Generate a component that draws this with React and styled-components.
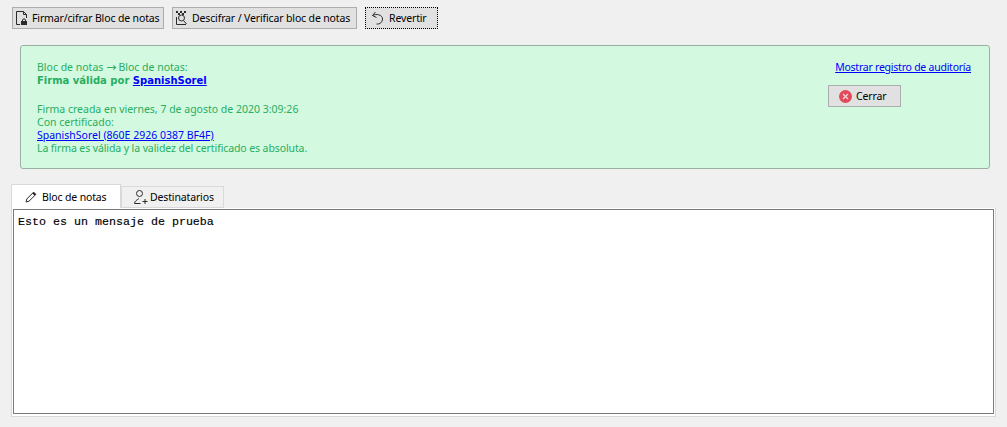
import React from "react";
import styled, { createGlobalStyle } from "styled-components";

const GlobalStyle = createGlobalStyle`
  html, body {
    margin: 0;
    padding: 0;
    background: #f0f0f0;
  }
  * {
    box-sizing: border-box;
  }
`;

const Page = styled.div`
  width: 1007px;
  height: 427px;
  padding: 7px 11px 0;
  overflow: hidden;
  background: #f0f0f0;
  color: #000000;
  font-family: "Noto Sans", "Liberation Sans", sans-serif;
  font-size: 10.5px;
`;

const Toolbar = styled.div`
  display: flex;
  gap: 8px;
  height: 22px;
  margin-left: 1px;
`;

const Button = styled.button`
  display: flex;
  align-items: center;
  gap: ${(p) => p.$gap || 3}px;
  height: 22px;
  width: ${(p) => p.$width}px;
  padding: 0 0 0 ${(p) => p.$pad || 0}px;
  background: #e1e1e1;
  border: 1px ${(p) => (p.$focused ? "dotted #000000" : "solid #adadad")};
  color: #000000;
  font: inherit;
  letter-spacing: -0.14px;
  white-space: nowrap;
`;

const Banner = styled.div`
  display: flex;
  justify-content: space-between;
  width: 970px;
  height: 124px;
  margin: 16px 0 0 9px;
  padding: 15px 18px 0 16px;
  background: #d3f9e0;
  border: 1px solid #9ab0a1;
  border-radius: 3px;
  color: #27ae60;
  line-height: 13px;
`;

const Arrow = styled.span`
  margin: 0 2px 0 3px;
  font-family: "DejaVu Sans", sans-serif;
  font-size: 12px;
`;

const Strong = styled.div`
  margin-bottom: 16px;
  font-family: "DejaVu Sans", sans-serif;
  font-size: 10px;
  font-weight: 700;
`;

const Verdict = styled.div`
  letter-spacing: -0.1px;
`;

const Link = styled.a`
  color: #0000ff;
  text-decoration: underline;
  white-space: nowrap;
`;

const Aside = styled.div`
  display: flex;
  flex-direction: column;
  align-items: flex-start;
  gap: 11px;
  width: 143px;
`;

const AuditLink = styled(Link)`
  align-self: flex-end;
  letter-spacing: -0.24px;
`;

const Tabs = styled.div`
  display: flex;
  align-items: flex-end;
  height: 24px;
  margin-top: 15px;
`;

const Tab = styled.div`
  display: flex;
  align-items: center;
  gap: ${(p) => (p.$active ? 5 : 1)}px;
  width: ${(p) => p.$width}px;
  height: ${(p) => (p.$active ? 24 : 22)}px;
  padding-left: ${(p) => (p.$active ? 13 : 11)}px;
  background: ${(p) => (p.$active ? "#ffffff" : "#f0f0f0")};
  border: 1px solid #d9d9d9;
  border-bottom: ${(p) => (p.$active ? "none" : "1px solid #d9d9d9")};
  letter-spacing: -0.14px;
`;

const Pane = styled.div`
  width: 985px;
  height: 209px;
  padding: 1px 1px 2px;
  background: #ffffff;
  border: 1px solid #d9d9d9;
  border-top: none;
`;

const Editor = styled.div`
  height: 100%;
  padding: 6px 4px;
  background: #ffffff;
  border: 1px solid #7a7a7a;
  font-family: "Liberation Mono", monospace;
  font-size: 11.67px;
  line-height: 13px;
  -webkit-text-stroke: 0.15px #000000;
`;

const Icon = styled.svg`
  flex: none;
  fill: none;
  stroke: #2b2b2b;
  stroke-width: 1;
`;

function SignIcon() {
  return (
    <Icon width="16" height="16" viewBox="0 0 16 16">
      <path d="M7 14.5H3.5V1.5H10.5L13.5 4.5V8" />
      <path d="M10.5 1.5V4.5H13.5" />
      <rect x="8.5" y="11.5" width="5" height="3" fill="#2b2b2b" />
      <path d="M9.5 11V10C9.5 8.5 12.5 8.5 12.5 10V11" />
    </Icon>
  );
}

function DecryptIcon() {
  return (
    <Icon width="16" height="16" viewBox="0 0 16 16">
      <path d="M3.5 7V14.5H13" />
      <circle cx="8.5" cy="8" r="3" />
      <path d="M10.5 10.5L13.5 14" />
      <path d="M3 1h2v2h-2zM7 1h2v2h-2zM11 1h2v2h-2zM5 3h2v2h-2zM9 3h2v2h-2z" fill="#2b2b2b" stroke="none" />
    </Icon>
  );
}

function RevertIcon() {
  return (
    <Icon width="16" height="16" viewBox="0 0 16 16">
      <path d="M5.5 2L2.5 5.5L6.5 7.5" />
      <path d="M2.5 5.5C6 3.5 12.5 4.5 12.5 9C12.5 12 10 14.5 6.5 14" />
    </Icon>
  );
}

function CloseIcon() {
  return (
    <svg width="13" height="13" viewBox="0 0 13 13">
      <circle cx="6.5" cy="6.5" r="6.5" fill="#e04a5a" />
      <path d="M4 4L9 9M9 4L4 9" stroke="#f7d5d8" strokeWidth="1.3" />
    </svg>
  );
}

function PencilIcon() {
  return (
    <Icon width="12" height="12" viewBox="0 0 12 12">
      <path d="M1 11L1.8 8L8.5 1.2L10.8 3.5L4 10.2Z" />
      <path d="M8 1.7L10.3 4" strokeWidth="2" />
    </Icon>
  );
}

function RecipientsIcon() {
  return (
    <Icon width="16" height="16" viewBox="0 0 16 16">
      <circle cx="6.5" cy="4.5" r="3" />
      <path d="M1.5 14.5C1.5 12 4 11 6 9.5" />
      <path d="M1.5 14.5H7.5M12 10V15M9.5 12.5H14.5" />
    </Icon>
  );
}

function App() {
  return (
    <Page>
      <GlobalStyle />
      <Toolbar>
        <Button $width={152}>
          <SignIcon />
          Firmar/cifrar Bloc de notas
        </Button>
        <Button $width={185}>
          <DecryptIcon />
          Descifrar / Verificar bloc de notas
        </Button>
        <Button $width={73} $pad={4} $focused>
          <RevertIcon />
          Revertir
        </Button>
      </Toolbar>
      <Banner>
        <div>
          <div>
            Bloc de notas<Arrow>→</Arrow>Bloc de notas:
          </div>
          <Strong>
            Firma válida por <Link href="#">SpanishSorel</Link>
          </Strong>
          <div>Firma creada en viernes, 7 de agosto de 2020 3:09:26</div>
          <div>Con certificado:</div>
          <div>
            <Link href="#">SpanishSorel (860E 2926 0387 BF4F)</Link>
          </div>
          <Verdict>La firma es válida y la validez del certificado es absoluta.</Verdict>
        </div>
        <Aside>
          <AuditLink href="#">Mostrar registro de auditoría</AuditLink>
          <Button $width={73} $pad={10} $gap={4}>
            <CloseIcon />
            Cerrar
          </Button>
        </Aside>
      </Banner>
      <Tabs>
        <Tab $active $width={110}>
          <PencilIcon />
          Bloc de notas
        </Tab>
        <Tab $width={103}>
          <RecipientsIcon />
          Destinatarios
        </Tab>
      </Tabs>
      <Pane>
        <Editor>Esto es un mensaje de prueba</Editor>
      </Pane>
    </Page>
  );
}

export default App;
